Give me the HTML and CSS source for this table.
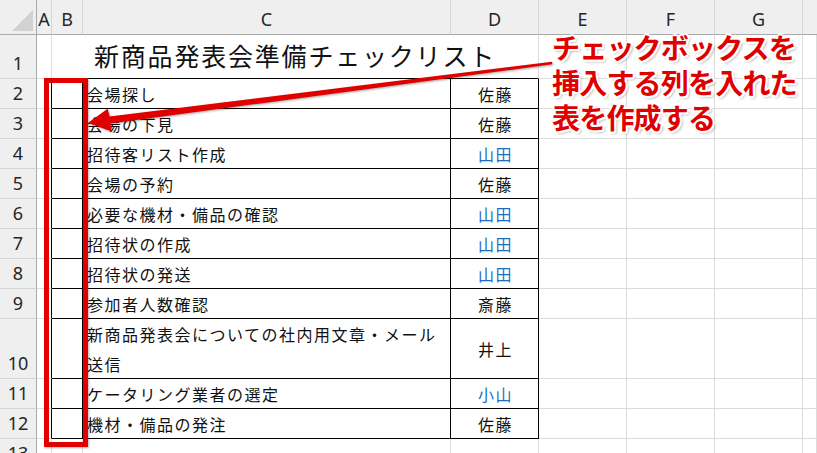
FILE: index.html
```html
<!DOCTYPE html>
<html lang="ja">
<head>
<meta charset="utf-8">
<link rel="stylesheet" href="styles.css">
</head>
<body>
<div class="sheet">
  <div class="corner"><span class="tri"></span></div>
  <div class="ch">A</div><div class="ch">B</div><div class="ch">C</div><div class="ch">D</div><div class="ch">E</div><div class="ch">F</div><div class="ch">G</div><div class="ch last"></div>

  <div class="rh">1</div><div class="c"></div><div class="c title">新商品発表会準備チェックリスト</div><div class="c"></div><div class="c"></div><div class="c"></div><div class="c"></div>

  <div class="rh">2</div><div class="c a"></div><div class="c t"></div><div class="c t task">会場探し</div><div class="c t who">佐藤</div><div class="c"></div><div class="c"></div><div class="c"></div><div class="c"></div>
  <div class="rh">3</div><div class="c a"></div><div class="c t"></div><div class="c t task">会場の下見</div><div class="c t who">佐藤</div><div class="c"></div><div class="c"></div><div class="c"></div><div class="c"></div>
  <div class="rh">4</div><div class="c a"></div><div class="c t"></div><div class="c t task">招待客リスト作成</div><div class="c t who blue">山田</div><div class="c"></div><div class="c"></div><div class="c"></div><div class="c"></div>
  <div class="rh">5</div><div class="c a"></div><div class="c t"></div><div class="c t task">会場の予約</div><div class="c t who">佐藤</div><div class="c"></div><div class="c"></div><div class="c"></div><div class="c"></div>
  <div class="rh">6</div><div class="c a"></div><div class="c t"></div><div class="c t task">必要な機材・備品の確認</div><div class="c t who blue">山田</div><div class="c"></div><div class="c"></div><div class="c"></div><div class="c"></div>
  <div class="rh">7</div><div class="c a"></div><div class="c t"></div><div class="c t task">招待状の作成</div><div class="c t who blue">山田</div><div class="c"></div><div class="c"></div><div class="c"></div><div class="c"></div>
  <div class="rh">8</div><div class="c a"></div><div class="c t"></div><div class="c t task">招待状の発送</div><div class="c t who blue">山田</div><div class="c"></div><div class="c"></div><div class="c"></div><div class="c"></div>
  <div class="rh">9</div><div class="c a"></div><div class="c t"></div><div class="c t task">参加者人数確認</div><div class="c t who">斎藤</div><div class="c"></div><div class="c"></div><div class="c"></div><div class="c"></div>
  <div class="rh">10</div><div class="c a"></div><div class="c t"></div><div class="c t task">新商品発表会についての社内用文章・メール<br>送信</div><div class="c t who">井上</div><div class="c"></div><div class="c"></div><div class="c"></div><div class="c"></div>
  <div class="rh">11</div><div class="c a"></div><div class="c t"></div><div class="c t task">ケータリング業者の選定</div><div class="c t who blue">小山</div><div class="c"></div><div class="c"></div><div class="c"></div><div class="c"></div>
  <div class="rh">12</div><div class="c a"></div><div class="c t"></div><div class="c t task">機材・備品の発注</div><div class="c t who">佐藤</div><div class="c"></div><div class="c"></div><div class="c"></div><div class="c"></div>
  <div class="rh">13</div><div class="c"></div><div class="c"></div><div class="c"></div><div class="c"></div><div class="c"></div><div class="c"></div><div class="c"></div><div class="c"></div>
</div>

<div class="frame"></div>
<svg class="arrow" width="817" height="453" viewBox="0 0 817 453">
  <polygon points="552,61.8 109.6,116.5 107.6,108.8 88,123 111.8,131.6 110.4,123.5 552.3,64.3"/>
</svg>
<div class="callout">チェックボックスを<br>挿入する列を入れた<br>表を作成する</div>
</body>
</html>
```
FILE: styles.css
```css
html, body {
  margin: 0;
  padding: 0;
  background: #fff;
}
body {
  width: 817px;
  height: 453px;
  overflow: hidden;
  position: relative;
  font-family: "Noto Sans CJK JP", "Noto Sans", sans-serif;
}
.sheet {
  display: grid;
  grid-template-columns: 37px 15px 31px 368px 88px 88px 88px 88px 14px;
  grid-template-rows: 35px 44px repeat(8, 30px) 60px 30px 30px 30px;
}
.sheet > div {
  box-sizing: border-box;
}
.corner {
  background: #efefef;
  border-right: 1px solid #a9a9a9;
  border-bottom: 1px solid #a9a9a9;
  position: relative;
}
.tri {
  position: absolute;
  right: 3px;
  bottom: 3px;
  width: 0;
  height: 0;
  border-left: 21px solid transparent;
  border-bottom: 21px solid #d2d2d2;
}
.ch {
  background: #efefef;
  border-right: 1px solid #d6d6d6;
  border-bottom: 1px solid #a9a9a9;
  font-family: "Noto Sans", sans-serif;
  font-size: 18px;
  color: #262626;
  text-align: center;
  line-height: 22px;
  padding-top: 8px;
}
.ch.last { border-right: none; }
.rh {
  background: #efefef;
  border-right: 1px solid #a9a9a9;
  border-bottom: 1px solid #d6d6d6;
  font-family: "Noto Sans", sans-serif;
  font-size: 18px;
  color: #262626;
  display: flex;
  align-items: flex-end;
  justify-content: center;
  line-height: 30px;
}
.c {
  border-right: 1px solid #dcdcdc;
  border-bottom: 1px solid #dcdcdc;
}
.title {
  grid-column: span 3;
  border-bottom: 1px solid #000;
  font-size: 25px;
  letter-spacing: 1.8px;
  color: #111;
  padding-left: 42px;
  line-height: 40px;
  white-space: nowrap;
}
.a { border-right: 1px solid #000; }
.t {
  border-right: 1px solid #000;
  border-bottom: 1px solid #000;
}
.task {
  font-size: 16px;
  letter-spacing: 1.5px;
  color: #111;
  padding-left: 4px;
  line-height: 30px;
  display: flex;
  align-items: center;
  white-space: nowrap;
}
.who {
  font-size: 16px;
  letter-spacing: 1.5px;
  color: #111;
  display: flex;
  align-items: center;
  justify-content: center;
  padding-left: 2px;
}
.blue { color: #1b6ec2; }

.frame {
  position: absolute;
  left: 44px;
  top: 78px;
  width: 44px;
  height: 369px;
  box-sizing: border-box;
  border: 5px solid #e00000;
  box-shadow: 1px 1px 2px rgba(0,0,0,0.3);
}
.arrow {
  position: absolute;
  left: 0;
  top: 0;
  pointer-events: none;
}
.arrow polygon {
  fill: #e00000;
  filter: drop-shadow(1px 1px 1px rgba(0,0,0,0.35));
}
.callout {
  position: absolute;
  left: 552px;
  top: 30px;
  font-size: 28px;
  font-weight: 700;
  line-height: 35px;
  letter-spacing: -0.8px;
  color: #e00000;
  white-space: nowrap;
  text-shadow:
    2px 0 #fff, -2px 0 #fff, 0 2px #fff, 0 -2px #fff,
    1.5px 1.5px #fff, -1.5px 1.5px #fff, 1.5px -1.5px #fff, -1.5px -1.5px #fff,
    2px 2px 3px rgba(0,0,0,0.45);
}
```
